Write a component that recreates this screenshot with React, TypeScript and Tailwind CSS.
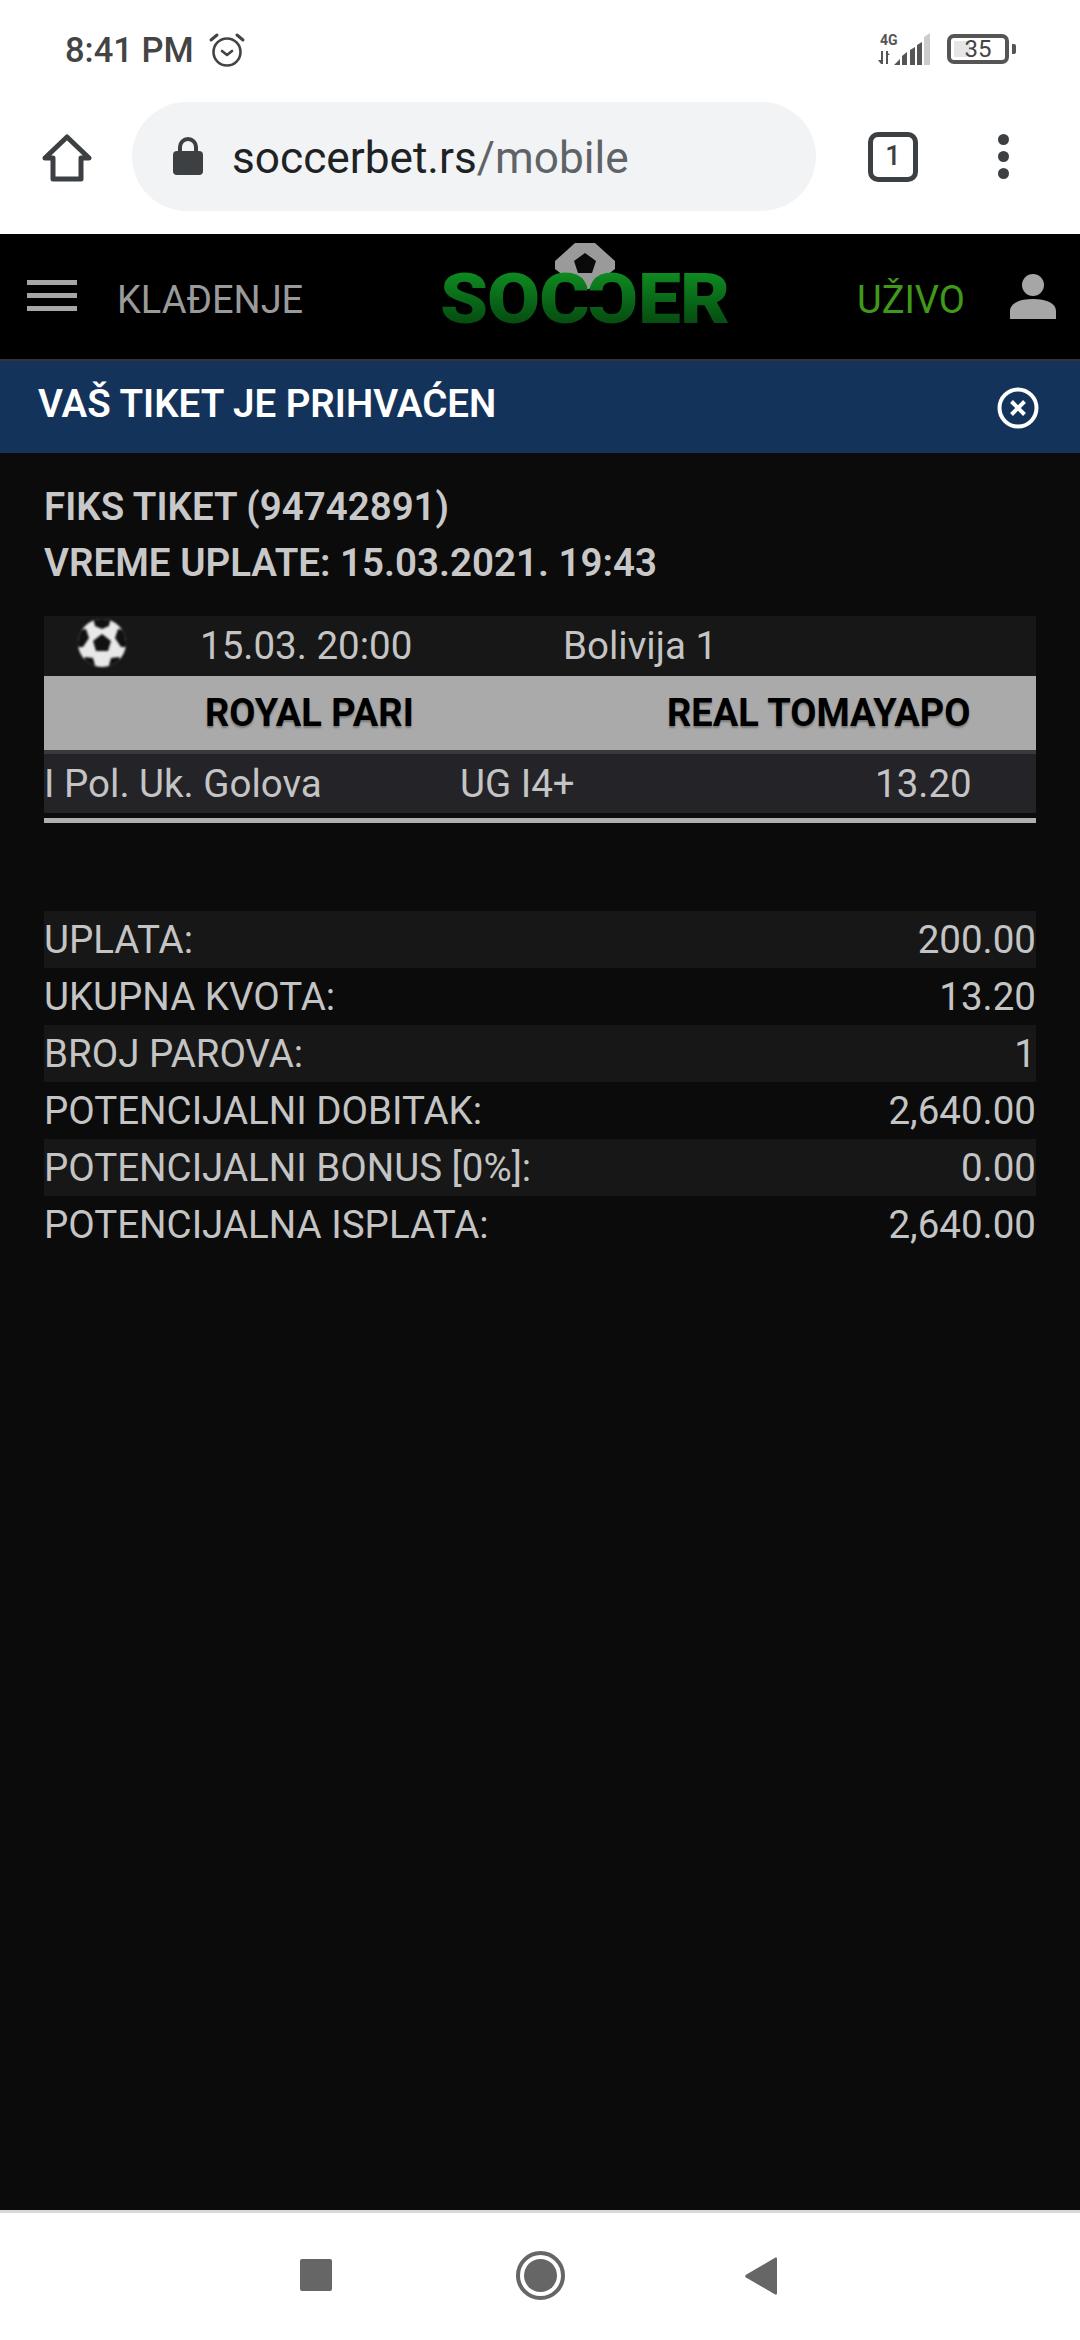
import React from "react";

const rows: [string, string, boolean][] = [
  ["UPLATA:", "200.00", true],
  ["UKUPNA KVOTA:", "13.20", false],
  ["BROJ PAROVA:", "1", true],
  ["POTENCIJALNI DOBITAK:", "2,640.00", false],
  ["POTENCIJALNI BONUS [0%]:", "0.00", true],
  ["POTENCIJALNA ISPLATA:", "2,640.00", false],
];

function Ball() {
  return (
    <svg width="52" height="52" viewBox="0 0 52 52">
      <defs>
        <clipPath id="b"><circle cx="26" cy="26" r="24" /></clipPath>
      </defs>
      <circle cx="26" cy="26" r="24" fill="#e8e8e8" />
      <g clipPath="url(#b)" fill="#111">
        <polygon points="26,17 35,24 32,34 20,34 17,24" />
        <polygon points="17,0 35,0 33,9 26,12 19,9" />
        <polygon points="0,14 10,12 13,21 7,30 0,30" />
        <polygon points="52,14 42,12 39,21 45,30 52,30" />
        <polygon points="9,40 17,41 20,52 6,52" />
        <polygon points="43,40 35,41 32,52 46,52" />
      </g>
    </svg>
  );
}

const letter =
  "inline-block bg-gradient-to-b from-[#0f8f22] to-[#05460f] bg-clip-text text-transparent";

export default function App() {
  return (
    <div className="w-[1080px] h-[2340px] flex flex-col bg-white font-['Roboto',sans-serif] overflow-hidden">
      {/* status bar */}
      <div className="h-[79px] shrink-0 flex items-start justify-between pl-[65px] pr-[64px] pt-[30px]">
        <div className="flex items-center gap-[14px] text-[#444] text-[34.5px] leading-[40px] font-medium">
          <span>8:41 PM</span>
          <svg width="38" height="38" viewBox="0 0 38 38" fill="none" stroke="#444" strokeWidth="2.6" strokeLinecap="round" strokeLinejoin="round">
            <circle cx="19" cy="21" r="13.5" />
            <path d="M14 20l5 4 5-4" />
            <path d="M3 9l6-5M35 9l-6-5" strokeWidth="3" />
          </svg>
        </div>
        <div className="flex items-center gap-[14px] mt-[2px]">
          <svg width="56" height="34" viewBox="0 0 56 34" fill="#555" className="-ml-[4px]">
            <text x="3" y="13" fontSize="14" fontWeight="700" fontFamily="Roboto, sans-serif">4G</text>
            <path d="M4 19h2v13H4zM1 28l3 4v-4zM9 19h2v13H9zM9 19l4 4H9z" />
            <path d="M17 33l6-6v6zM25 33v-9l5-4v13zM33 33V18l5-3v18zM40 33V13l5-3v23z" />
            <path d="M47 33V5l6-4v32z" fill="#ccc" />
          </svg>
          <div className="flex items-center gap-[3px]">
            <div className="relative w-[62px] h-[30px] rounded-[7px] border-[4px] border-[#555] flex items-center justify-center text-[#444] text-[24px] leading-none">
              <div className="absolute left-[3px] top-[3px] bottom-[3px] w-[16px] bg-[#e6e6e6]" />
              <span className="relative">35</span>
            </div>
            <div className="w-[4px] h-[10px] bg-[#555] rounded-r-[2px]" />
          </div>
        </div>
      </div>

      {/* browser toolbar */}
      <div className="h-[155px] shrink-0 flex items-center pl-[42px] pr-[42px]">
        <svg width="50" height="50" viewBox="0 0 50 50" fill="none" stroke="#3c4043" strokeWidth="5" strokeLinejoin="round" className="shrink-0 mt-[2px]">
          <path d="M3 25L25 4l22 21h-8v21H11V25z" />
        </svg>
        <div className="ml-[40px] w-[684px] h-[109px] rounded-full bg-[#f1f3f4] flex items-center pl-[40px] shrink-0">
          <svg width="32" height="38" viewBox="0 0 32 38" className="shrink-0 mb-[2px]">
            <path d="M8 15V10a8 8 0 0116 0v5" fill="none" stroke="#3c4043" strokeWidth="4" />
            <rect x="1" y="14" width="30" height="24" rx="4" fill="#3c4043" />
          </svg>
          <span className="ml-[28px] mt-[4px] text-[44.2px] leading-none text-[#202124]">
            soccerbet.rs<span className="text-[#5f6368]">/mobile</span>
          </span>
        </div>
        <div className="ml-[52px] w-[50px] h-[50px] rounded-[10px] border-[5px] border-[#3c4043] flex items-center justify-center text-[#3c4043] text-[27px] font-medium shrink-0">
          1
        </div>
        <div className="ml-[80px] flex flex-col gap-[6px] shrink-0">
          <div className="w-[11px] h-[11px] rounded-full bg-[#3c4043]" />
          <div className="w-[11px] h-[11px] rounded-full bg-[#3c4043]" />
          <div className="w-[11px] h-[11px] rounded-full bg-[#3c4043]" />
        </div>
      </div>

      {/* site header */}
      <div className="h-[127px] shrink-0 bg-black flex items-start border-b-[2px] border-[#333] pl-[27px]">
        <div className="mt-[46px] w-[50px] flex flex-col gap-[8px] shrink-0">
          <div className="h-[5px] bg-[#a6a6a6]" />
          <div className="h-[5px] bg-[#a6a6a6]" />
          <div className="h-[5px] bg-[#a6a6a6]" />
        </div>
        <span className="ml-[40px] mt-[45px] w-[186px] text-[38px] leading-[42px] text-[#9a9a9a] shrink-0">KLAĐENJE</span>
        <div className="relative ml-[137px] mt-[9px] w-[290px] h-[82px] shrink-0 blur-[0.7px]">
          <svg width="60" height="48" viewBox="0 0 60 48" className="absolute left-[115px] top-0">
            <polygon points="20,0 40,0 60,18 60,26 34,46 26,46 0,26 0,18" fill="#9a9a9a" />
            <polygon points="30,10 41,18 37,30 23,30 19,18" fill="#0a0a0a" />
          </svg>
          <span className="absolute left-0 bottom-[-4px] flex origin-left scale-x-[1.1] text-[70px] leading-[60px] font-black tracking-[-1px] whitespace-nowrap">
            <span className={letter}>S</span>
            <span className={letter}>O</span>
            <span className={letter}>C</span>
            <span className={`${letter} -scale-x-100`}>C</span>
            <span className={letter}>E</span>
            <span className={letter}>R</span>
          </span>
          <div className="absolute left-[122px] top-[56px] w-[50px] h-[8px] bg-black rounded-full" />
        </div>
        <span className="ml-[127px] mt-[45px] w-[108px] text-[38px] leading-[42px] text-[#3f9a1c] shrink-0">UŽIVO</span>
        <svg width="46" height="46" viewBox="0 0 46 46" fill="#a6a6a6" className="ml-[45px] mt-[40px] shrink-0">
          <ellipse cx="23" cy="11" rx="11" ry="11" />
          <path d="M0 45V37c0-8 10-12 23-12s23 4 23 12v8z" />
        </svg>
      </div>

      {/* banner */}
      <div className="h-[92px] shrink-0 bg-[#14335a] flex items-center justify-between pl-[38px] pr-[41px]">
        <span className="text-[38.5px] leading-[42px] font-semibold text-white -mt-[6px]">VAŠ TIKET JE PRIHVAĆEN</span>
        <svg width="42" height="42" viewBox="0 0 42 42" fill="none" stroke="#fff" className="mt-[2px]">
          <circle cx="21" cy="21" r="18.5" strokeWidth="4" />
          <path d="M14.5 14.5l13 13M27.5 14.5l-13 13" strokeWidth="4" />
        </svg>
      </div>

      {/* content */}
      <div className="flex-1 bg-[#0b0b0b] px-[44px] pt-[26px] text-[#c4c4c4]">
        <div className="text-[38.5px] leading-[56px] font-semibold text-[#c8c8c8]">
          <div>FIKS TIKET (94742891)</div>
          <div>VREME UPLATE: 15.03.2021. 19:43</div>
        </div>

        <div className="mt-[25px]">
          <div className="h-[60px] bg-[#171717] flex items-center text-[38.5px] text-[#c4c4c4]">
            <div className="ml-[32px] w-[52px] h-[52px] -mt-[6px] shrink-0 blur-[1px]"><Ball /></div>
            <span className="ml-[72px] w-[363px] shrink-0">15.03. 20:00</span>
            <span>Bolivija 1</span>
          </div>
          <div className="h-[74px] bg-[#aaaaaa] flex items-center font-bold text-[38px] text-black [text-shadow:0_2px_2px_#777]">
            <span className="ml-[161px] w-[462px] shrink-0">ROYAL PARI</span>
            <span>REAL TOMAYAPO</span>
          </div>
          <div className="h-[63px] bg-[#232328] border-t-[4px] border-[#3a3a3a] flex items-center text-[38.5px] text-[#c4c4c4]">
            <span className="w-[416px] shrink-0">I Pol. Uk. Golova</span>
            <span className="w-[415px] shrink-0">UG I4+</span>
            <span>13.20</span>
          </div>
          <div className="h-[5px] mt-[5px] bg-[#b0b0b0]" />
        </div>

        <div className="mt-[88px] text-[38.5px] text-[#c4c4c4]">
          {rows.map(([label, value, shaded]) => (
            <div key={label} className={`h-[57px] flex items-center justify-between ${shaded ? "bg-[#171717]" : ""}`}>
              <span>{label}</span>
              <span>{value}</span>
            </div>
          ))}
        </div>
      </div>

      {/* nav bar */}
      <div className="h-[130px] shrink-0 bg-white border-t-[3px] border-[#d8d8d8] flex items-start pl-[300px] pt-[33px]">
        <div className="w-[32px] h-[32px] mt-[13px] rounded-[2px] bg-[#666] shrink-0" />
        <div className="ml-[184px] w-[49px] h-[49px] mt-[5px] rounded-full border-[4px] border-[#666] flex items-center justify-center shrink-0">
          <div className="w-[33px] h-[33px] rounded-full bg-[#666]" />
        </div>
        <svg width="32" height="38" viewBox="0 0 32 38" fill="#666" className="ml-[180px] shrink-0 mt-[11px]">
          <path d="M31 0.5c.6 0 1 .5 1 1v35c0 1-1 1.4-1.8 1L1 20.5c-1-.7-1-2 0-2.7L30 .8c.4-.2.7-.3 1-.3z" />
        </svg>
      </div>
    </div>
  );
}
